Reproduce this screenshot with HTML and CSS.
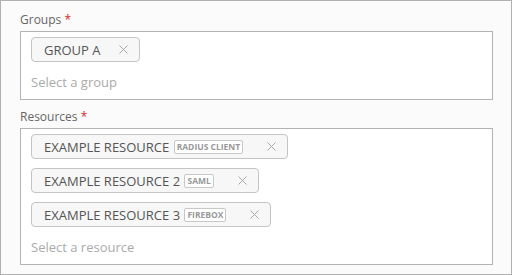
FILE: index.html
```html
<!DOCTYPE html>
<html lang="en">
<head>
	<meta charset="UTF-8">
	<title>Groups and Resources</title>
	<link rel="stylesheet" href="styles.css">
</head>
<body>
<main class="panel">
	<div class="field">
		<label class="field-label">Groups <span class="req">*</span></label>
		<div class="select-box">
			<span class="chip">GROUP A<svg class="chip-x" viewBox="0 0 10 10"><path d="M0.5 0.5L9.5 9.5M9.5 0.5L0.5 9.5"/></svg></span>
			<div class="placeholder">Select a group</div>
		</div>
	</div>

	<div class="field">
		<label class="field-label">Resources <span class="req">*</span></label>
		<div class="select-box">
			<span class="chip">EXAMPLE RESOURCE <span class="badge">RADIUS CLIENT</span><svg class="chip-x" viewBox="0 0 10 10"><path d="M0.5 0.5L9.5 9.5M9.5 0.5L0.5 9.5"/></svg></span>
			<span class="chip">EXAMPLE RESOURCE 2 <span class="badge">SAML</span><svg class="chip-x" viewBox="0 0 10 10"><path d="M0.5 0.5L9.5 9.5M9.5 0.5L0.5 9.5"/></svg></span>
			<span class="chip">EXAMPLE RESOURCE 3 <span class="badge">FIREBOX</span><svg class="chip-x" viewBox="0 0 10 10"><path d="M0.5 0.5L9.5 9.5M9.5 0.5L0.5 9.5"/></svg></span>
			<div class="placeholder">Select a resource</div>
		</div>
	</div>
</main>
</body>
</html>
```

FILE: styles.css
```css
body{
	margin: 0;
	font-family: "Open Sans", "Noto Sans", sans-serif;
}

.panel{
	box-sizing: border-box;
	width: 512px;
	height: 275px;
	border: 1px solid #b0b0b0;
	background: #fbfbfb;
	padding: 11px 18px 0 19px;
}

.field{
	margin-bottom: 9px;
}

.field-label{
	display: block;
	font-size: 12px;
	line-height: 16px;
	color: #666;
	margin-bottom: 3px;
}

.req{
	color: #d9262c;
}

.select-box{
	background: #fff;
	border: 1px solid #b3b3b3;
	padding: 5px 10px 6px 10px;
	display: flex;
	flex-direction: column;
	align-items: flex-start;
}

.chip{
	display: inline-flex;
	align-items: center;
	height: 23px;
	padding: 0 11px 0 12px;
	margin-bottom: 9px;
	border: 1px solid #c4c4c4;
	border-radius: 4px;
	background: #f7f7f7;
	color: #555;
	font-size: 13px;
	white-space: pre;
}

.badge{
	font-size: 8.5px;
	font-weight: bold;
	color: #999;
	border: 1px solid #c8c8c8;
	border-radius: 2px;
	background: #fff;
	padding: 0 2px;
	line-height: 12px;
	margin-left: 1px;
	margin-right: 5px;
}

.chip-x{
	width: 9px;
	height: 9px;
	margin-left: 19px;
	stroke: #a8a8a8;
	stroke-width: 1.1;
	fill: none;
}

.placeholder{
	font-size: 13px;
	line-height: 22px;
	color: #aaa;
}
```
